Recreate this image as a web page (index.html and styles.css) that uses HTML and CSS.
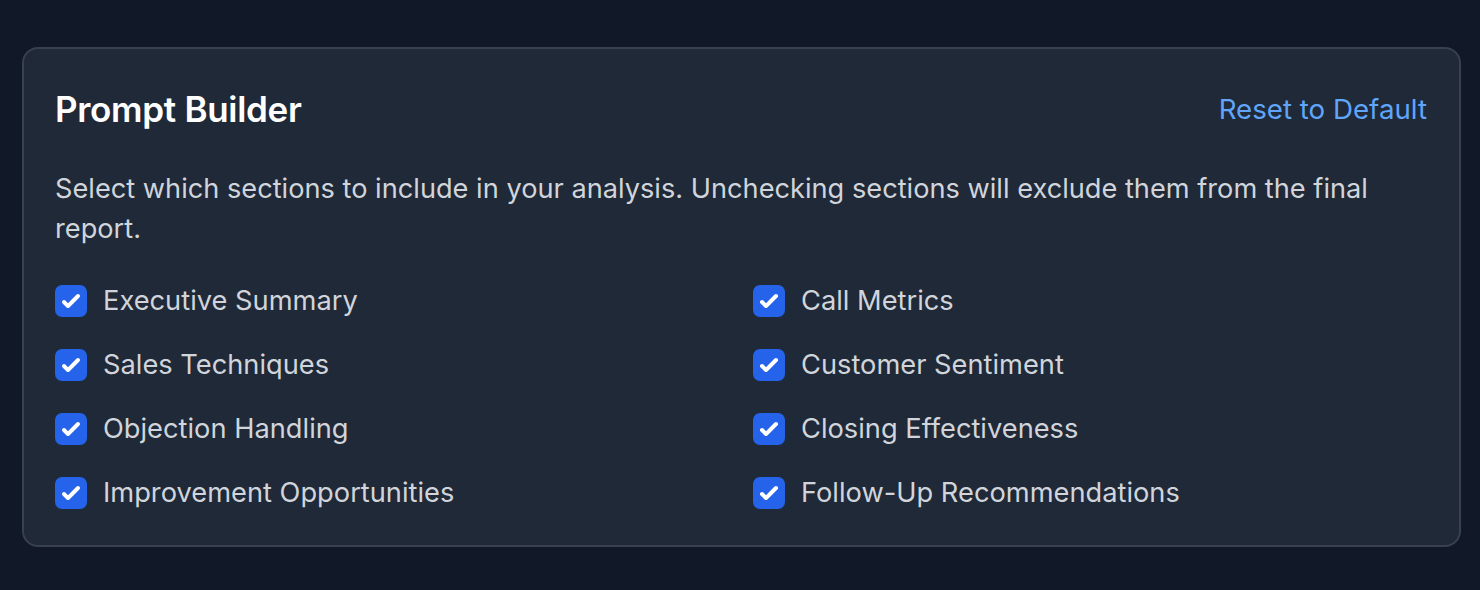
FILE: index.html
```html
<!DOCTYPE html>
<html lang="en">
<head>
<meta charset="utf-8">
<title>Prompt Builder</title>
<link rel="stylesheet" href="styles.css">
</head>
<body>
<section class="card">
  <header class="card-head">
    <h2 class="title">Prompt Builder</h2>
    <button class="reset" type="button">Reset to Default</button>
  </header>
  <p class="desc">Select which sections to include in your analysis. Unchecking sections will exclude them from the final report.</p>
  <div class="grid">
    <label class="opt"><span class="box"><svg viewBox="0 0 16 16"><path d="M12.207 4.793a1 1 0 010 1.414l-5 5a1 1 0 01-1.414 0l-2-2a1 1 0 011.414-1.414L6.5 9.086l4.293-4.293a1 1 0 011.414 0z"/></svg></span>Executive Summary</label>
    <label class="opt"><span class="box"><svg viewBox="0 0 16 16"><path d="M12.207 4.793a1 1 0 010 1.414l-5 5a1 1 0 01-1.414 0l-2-2a1 1 0 011.414-1.414L6.5 9.086l4.293-4.293a1 1 0 011.414 0z"/></svg></span>Call Metrics</label>
    <label class="opt"><span class="box"><svg viewBox="0 0 16 16"><path d="M12.207 4.793a1 1 0 010 1.414l-5 5a1 1 0 01-1.414 0l-2-2a1 1 0 011.414-1.414L6.5 9.086l4.293-4.293a1 1 0 011.414 0z"/></svg></span>Sales Techniques</label>
    <label class="opt"><span class="box"><svg viewBox="0 0 16 16"><path d="M12.207 4.793a1 1 0 010 1.414l-5 5a1 1 0 01-1.414 0l-2-2a1 1 0 011.414-1.414L6.5 9.086l4.293-4.293a1 1 0 011.414 0z"/></svg></span>Customer Sentiment</label>
    <label class="opt"><span class="box"><svg viewBox="0 0 16 16"><path d="M12.207 4.793a1 1 0 010 1.414l-5 5a1 1 0 01-1.414 0l-2-2a1 1 0 011.414-1.414L6.5 9.086l4.293-4.293a1 1 0 011.414 0z"/></svg></span>Objection Handling</label>
    <label class="opt"><span class="box"><svg viewBox="0 0 16 16"><path d="M12.207 4.793a1 1 0 010 1.414l-5 5a1 1 0 01-1.414 0l-2-2a1 1 0 011.414-1.414L6.5 9.086l4.293-4.293a1 1 0 011.414 0z"/></svg></span>Closing Effectiveness</label>
    <label class="opt"><span class="box"><svg viewBox="0 0 16 16"><path d="M12.207 4.793a1 1 0 010 1.414l-5 5a1 1 0 01-1.414 0l-2-2a1 1 0 011.414-1.414L6.5 9.086l4.293-4.293a1 1 0 011.414 0z"/></svg></span>Improvement Opportunities</label>
    <label class="opt"><span class="box"><svg viewBox="0 0 16 16"><path d="M12.207 4.793a1 1 0 010 1.414l-5 5a1 1 0 01-1.414 0l-2-2a1 1 0 011.414-1.414L6.5 9.086l4.293-4.293a1 1 0 011.414 0z"/></svg></span>Follow-Up Recommendations</label>
  </div>
</section>
</body>
</html>
```

FILE: styles.css
```css
* { box-sizing: border-box; }
html, body { margin: 0; }
body {
  background: #111827;
  padding: 47px 20px 0 22px;
  font-family: Inter, "Noto Sans", "Liberation Sans", sans-serif;
  height: 590px;
  overflow: hidden;
}
.card {
  width: 1439px;
  background: #1f2937;
  border: 2px solid #374151;
  border-radius: 16px;
  padding: 32px 32px 32px 31px;
}
.card-head {
  display: flex;
  justify-content: space-between;
  align-items: center;
  height: 56px;
  margin-bottom: 32px;
}
.title {
  margin: 0;
  font-size: 35px;
  font-weight: 600;
  color: #ffffff;
  letter-spacing: -0.3px;
  line-height: 56px;
}
.reset {
  background: none;
  border: 0;
  padding: 0;
  font-family: inherit;
  font-size: 27.7px;
  color: #60a5fa;
  line-height: 40px;
  cursor: pointer;
}
.desc {
  margin: 0 0 32px;
  font-size: 27.2px;
  line-height: 40px;
  color: #d1d5db;
}
.grid {
  display: grid;
  grid-template-columns: 1fr 1fr;
  column-gap: 24px;
  row-gap: 24px;
}
.opt {
  display: flex;
  align-items: center;
  gap: 16px;
  font-size: 27.25px;
  line-height: 40px;
  color: #d1d5db;
}
.box {
  width: 32px;
  height: 32px;
  border-radius: 7px;
  background: #2563eb;
  display: flex;
  align-items: center;
  justify-content: center;
  flex: none;
}
.box svg {
  width: 32px;
  height: 32px;
  fill: #ffffff;
}
```
